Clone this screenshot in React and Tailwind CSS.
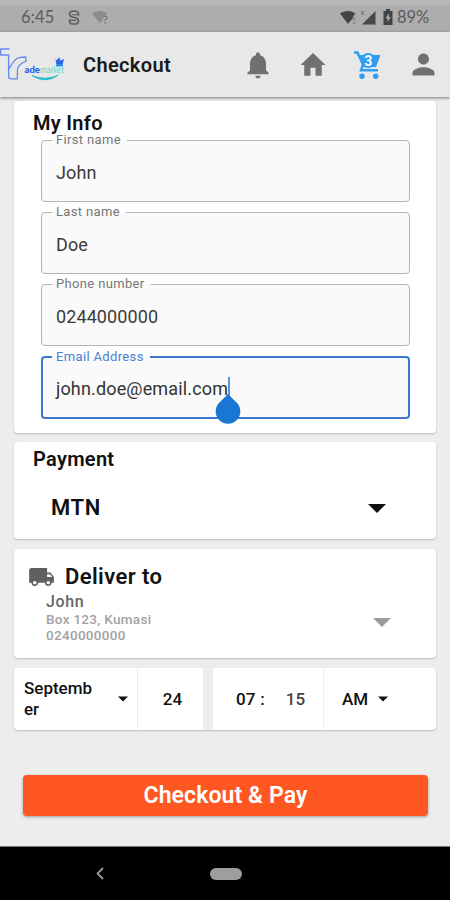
import React, { useState } from 'react';
import { MdNotifications, MdHome, MdPerson, MdLocalShipping } from 'react-icons/md';

const Caret = ({ className }) => (
  <svg viewBox="0 0 20 10" className={className} fill="currentColor">
    <path d="M0 0h20L10 10z" />
  </svg>
);

const StatusBar = () => (
  <div className="flex h-8 items-center border-t-[5px] border-[#b7b7b7] bg-[#adadad] pl-[21px] pr-[20px] text-[#5c5c5c]">
    <span className="-mt-[2px] w-[33px] whitespace-nowrap font-['Lato'] text-[16.5px] leading-none tracking-[0.2px]">6:45</span>
    <svg viewBox="0 0 12 16" className="-mt-[3px] ml-[14px] h-[15px] w-3" fill="none" stroke="currentColor" strokeWidth="1.7">
      <path d="M10.8 6V4.5C10.8 2.3 8.7 1 6 1S1.200 2.300 1.200 4.500 2.800 7.500 6 8s4.800 1.200 4.800 3.400S8.700 15 6 15s-4.800-1.300-4.800-3.600V10" />
      <path d="M3.500 5h7M1.500 11h7" strokeWidth="1.200" />
    </svg>
    <svg viewBox="0 0 17 15" className="-mt-[2px] ml-[12px] h-[15px] w-[17px] text-[#8b8b8b]">
      <path d="M0 3.500C4.500 0 10.500 0 15 3.500L13 6H10.500V10L8 13z" fill="currentColor" />
      <path d="M11.300 7.700c0-2 3.700-2 3.700.2 0 1.500-1.900 1.400-1.900 3M13.100 12v1.600" fill="none" stroke="#777" strokeWidth="1.300" />
    </svg>
    <svg viewBox="0 0 17 15" className="-mt-[3px] ml-auto h-[15px] w-[17px]">
      <path d="M0 3.500C4.500 0 11 0 15.500 3.500L13 6.500V8L8 14z" fill="#444" />
      <path d="M14 7v3.500M14 12v2" stroke="#8c8c8c" strokeWidth="2.600" />
    </svg>
    <svg viewBox="0 0 16 15" className="-mt-[3px] ml-[3px] h-[15px] w-4">
      <path d="M15.500 1v13.500H2z" fill="#474747" />
      <path d="M1 1h3v4H1z" fill="#8a8a8a" />
    </svg>
    <svg viewBox="0 0 10 16" className="-mt-[3px] ml-[7px] h-4 w-[10px]">
      <path d="M3 0h4v2h2.500v14h-9V2H3z" fill="#444" />
      <path d="M5.800 4.200 2.600 9.500h2v3.700L7.600 8H5.800z" fill="#adadad" />
    </svg>
    <span className="-mt-[3px] ml-[4px] w-[33px] whitespace-nowrap font-['Lato'] text-[16.5px] leading-none tracking-[-0.1px]">89%</span>
  </div>
);

const Logo = () => (
  <svg viewBox="0 0 65 40" className="h-10 w-[65px] shrink-0">
    <g fill="none" stroke="#6488ee" strokeWidth="1.300" strokeLinejoin="round">
      <path d="M9.500 4H.6v6h8v21.500q0 2.300 2.300 2.300h6.500V26q0-7 8.400-9.500V12Q20 12 17 13.500T9 24" />
    </g>
    <text x="24.500" y="27.500" fontFamily="Lato" fontSize="9" fontWeight="900" fill="#245dfa" textLength="15.500" lengthAdjust="spacingAndGlyphs">ade</text>
    <text x="40" y="27.500" fontFamily="Lato" fontSize="8.500" fill="#62d9c5" textLength="24" lengthAdjust="spacingAndGlyphs">market</text>
    <path d="M32 30.500q13 9 26.500-.5-13 6-26.500.5z" fill="#25bccd" stroke="#25bccd" strokeWidth=".8" />
    <path d="M53 12.500l2.500 1.500 1 5.800h6l1.500-6-3.500 2-1.300-3.500-2.500 3z" fill="#2862e8" />
    <path d="M56 19.500h7v2h-7z" fill="#2690e8" />
  </svg>
);

const CartIcon = () => (
  <svg viewBox="0 0 27 28" className="h-7 w-[27px] shrink-0 text-[#2f9df2]">
    <path d="M0 1.500h3.500L9 13.500 7 19.200h17" fill="none" stroke="currentColor" strokeWidth="2.400" />
    <path d="M3.500 4h22.500q.6 0 .3.800L22 16H9z" fill="currentColor" />
    <circle cx="14.200" cy="9.500" r="7.500" fill="currentColor" />
    <circle cx="8" cy="25.300" r="2.700" fill="currentColor" />
    <circle cx="21.700" cy="25.300" r="2.700" fill="currentColor" />
    <text x="14.200" y="14.500" textAnchor="middle" fontFamily="Roboto" fontSize="14" fontWeight="700" fill="#fff">3</text>
  </svg>
);

const Header = () => (
  <header className="relative z-10 flex h-[65px] items-center bg-[#e8e8e8] shadow-[0_1px_3px_rgba(0,0,0,0.5)]">
    <Logo />
    <h1 className="ml-[18px] w-[159px] text-[20px] font-semibold tracking-[0.35px] text-[#1a1a1a]">Checkout</h1>
    <MdNotifications className="h-8 w-8 shrink-0 text-[#707070]" />
    <MdHome className="ml-[24px] h-[30px] w-[30px] shrink-0 scale-y-[1.07] text-[#707070]" />
    <div className="ml-[26px]">
      <CartIcon />
    </div>
    <MdPerson className="ml-[26px] h-[33px] w-[33px] shrink-0 text-[#707070]" />
  </header>
);

const Card = ({ className, children }) => (
  <section className={`rounded-[4px] bg-white shadow-[0_1px_2px_rgba(0,0,0,0.22)] ${className}`}>{children}</section>
);

const Field = ({ label, value, onChange }) => (
  <fieldset className="h-[70px] rounded-[4px] border border-[#b5b5b5] bg-[#fafafa] pl-[14px]">
    <legend className="-ml-[4px] pl-[4px] pr-[6px] text-[13px] leading-[16px] tracking-[0.35px] text-[#777]">{label}</legend>
    <input className="block w-full bg-transparent pt-[13px] text-[18px] leading-6 tracking-[0.1px] text-[#3a3a3a] outline-none" value={value} onChange={onChange} />
  </fieldset>
);

const App = () => {
  const [info, setInfo] = useState({ first: 'John', last: 'Doe', phone: '0244000000' });
  const change = (key) => (e) => setInfo({ ...info, [key]: e.target.value });

  return (
    <div className="flex h-[900px] w-[450px] flex-col overflow-hidden bg-[#ededed] font-['Roboto',sans-serif] text-[#111]">
      <StatusBar />
      <Header />

      <main className="flex-1 px-[14px] pt-[4px]">
        <Card className="h-[332px] pl-[27px] pr-[26px] pt-[10px]">
          <h2 className="-ml-[8px] h-[21px] text-[20px] font-semibold leading-[25px] tracking-[0.3px]">My Info</h2>
          <div className="flex flex-col gap-[2px]">
            <Field label="First name" value={info.first} onChange={change('first')} />
            <Field label="Last name" value={info.last} onChange={change('last')} />
            <Field label="Phone number" value={info.phone} onChange={change('phone')} />
            <fieldset className="mt-[1px] h-[70px] rounded-[4px] border-2 border-[#3b78cd] bg-[#fafafa] pl-[13px]">
              <legend className="-ml-[4px] pl-[4px] pr-[6px] text-[13px] leading-[16px] tracking-[0.35px] text-[#4b80d5]">Email Address</legend>
              <div className="flex pt-[12px] text-[18px] leading-6 tracking-[0.15px] text-[#333]">
                <span>john.doe@email.com</span>
                <span className="relative h-[20px] w-[2px] bg-[#5c93df]">
                  <svg viewBox="0 0 26 30" className="absolute -left-[13px] top-[17px] h-[30px] w-[26px]">
                    <path d="M13 0 22 9A12.300 12.300 0 1 1 4 9z" fill="#1976d2" />
                  </svg>
                </span>
              </div>
            </fieldset>
          </div>
        </Card>

        <Card className="mt-[9px] h-[97px] pl-[19px] pr-[50px] pt-[5px]">
          <h2 className="text-[20px] font-semibold leading-[24px] tracking-[0.3px]">Payment</h2>
          <div className="ml-[18px] mt-[23px] flex items-center justify-between">
            <span className="text-[22px] font-semibold leading-[28px] tracking-[0.6px]">MTN</span>
            <Caret className="h-[9px] w-[18px]" />
          </div>
        </Card>

        <Card className="mt-[10px] h-[109px] pl-[14px] pr-[45px] pt-[14px]">
          <div className="flex h-[28px] items-center">
            <MdLocalShipping className="h-[28px] w-[27px] text-[#606060]" />
            <h2 className="ml-[10px] text-[22px] font-semibold leading-[28px] tracking-[0.4px]">Deliver to</h2>
          </div>
          <div className="ml-[18px] flex items-center justify-between">
            <div className="text-[13.5px] font-medium leading-[16px] tracking-[0.3px] text-[#a2a2a2]">
              <p className="text-[16px] leading-[21px] tracking-[0.6px] text-[#666]">John</p>
              <p className="-mt-px">Box 123, Kumasi</p>
              <p>0240000000</p>
            </div>
            <Caret className="mt-[11px] h-[9px] w-[18px] text-[#9a9a9a]" />
          </div>
        </Card>

        <Card className="mt-[10px] flex h-[62px] text-[17px] font-medium leading-[21px]">
          <div className="flex w-[123px] items-center justify-between pl-[10px] pr-[9px]">
            <span className="w-[72px] break-all">September</span>
            <Caret className="h-[6px] w-[10px]" />
          </div>
          <div className="flex w-[66px] items-center justify-center border-l border-[#ededed] pl-[4px]">24</div>
          <div className="w-[10px] bg-[#ededed]" />
          <div className="flex w-[110px] items-center pl-[23px]">
            <span>07</span>
            <span className="ml-[5px]">:</span>
            <span className="ml-[21px] text-[#444]">15</span>
          </div>
          <div className="flex flex-1 items-center border-l border-[#ededed] pl-[18px]">
            <span>AM</span>
            <Caret className="ml-[10px] h-[6px] w-[10px]" />
          </div>
        </Card>

        <button className="ml-[9px] mt-[45px] flex h-[41px] w-[405px] items-center justify-center rounded-[4px] bg-[#ff5722] pt-[2px] text-[23px] font-semibold tracking-[0.1px] text-white shadow-[0_1px_3px_rgba(0,0,0,0.35)]">
          Checkout &amp; Pay
        </button>
      </main>

      <nav className="flex h-[54px] items-center border-t border-[#777] bg-black pl-[96px]">
        <svg viewBox="0 0 8 13" className="h-[13px] w-2" fill="none" stroke="#999" strokeWidth="1.800">
          <path d="M7 1 1.500 6.500 7 12" />
        </svg>
        <div className="ml-[106px] h-3 w-[32px] rounded-full bg-[#9e9e9e]" />
      </nav>
    </div>
  );
};

export default App;
